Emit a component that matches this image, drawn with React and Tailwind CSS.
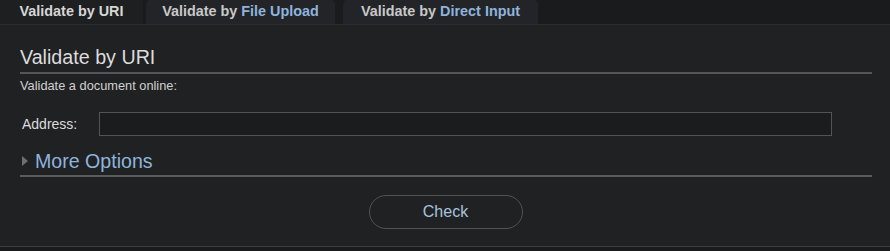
export default function App() {
  return (
    <div className="w-[890px] h-[251px] bg-[#1a1b1d] font-['Liberation_Sans',Arial,sans-serif] overflow-hidden">
      <div className="flex h-[25px] items-end gap-[3px] border-b border-[#2c2d30]">
        <div className="h-[25px] w-[143px] pt-[1px] flex items-center justify-center text-[14.4px] font-bold text-[#d6d6d6] bg-[#1e1f21]">
          Validate by URI
        </div>
        <div className="h-[25px] w-[189px] pt-[1px] flex items-center justify-center text-[14.4px] font-bold text-[#c8c8c8] bg-[#232427] rounded-t-[6px]">
          Validate by&nbsp;<span className="text-[#8fb4dc]">File Upload</span>
        </div>
        <div className="ml-[5px] h-[25px] w-[195px] pt-[1px] flex items-center justify-center text-[14.4px] font-bold text-[#c8c8c8] bg-[#232427] rounded-t-[6px]">
          Validate by&nbsp;<span className="text-[#8fb4dc]">Direct Input</span>
        </div>
      </div>
      <div className="h-[222px] bg-[#202123] border-b border-[#3d3e40] px-[20px] pt-[21px]">
        <h2 className="text-[19.7px] leading-[23px] text-[#dcdcdc] border-b-2 border-[#555658] pb-[3px] mr-[-2px]">
          Validate by URI
        </h2>
        <p className="mt-[5px] text-[12.8px] leading-[14px] text-[#d0d0d0]">Validate a document online:</p>
        <div className="mt-[19px] flex items-center">
          <span className="w-[79px] pl-[2px] text-[14px] text-[#dcdcdc]">Address:</span>
          <div className="w-[733px] h-[24px] bg-[#1b1c1e] border border-[#535456]" />
        </div>
        <div className="mt-[14px] flex items-center gap-[7px] pl-[2px] pb-[3px] border-b-2 border-[#5b5c5e] mr-[-2px]">
          <svg width="6" height="10" viewBox="0 0 6 10"><path d="M0 0 L6 5 L0 10 Z" fill="#6e6f72" /></svg>
          <span className="text-[19.6px] leading-[22px] text-[#8fb4dc]">More Options</span>
        </div>
        <div className="mt-[18px] flex justify-center">
          <button className="w-[154px] h-[34px] rounded-full border border-[#525356] bg-[#202123] text-[16px] text-[#a9c2de] ml-[1px]">
            Check
          </button>
        </div>
      </div>
    </div>
  );
}
